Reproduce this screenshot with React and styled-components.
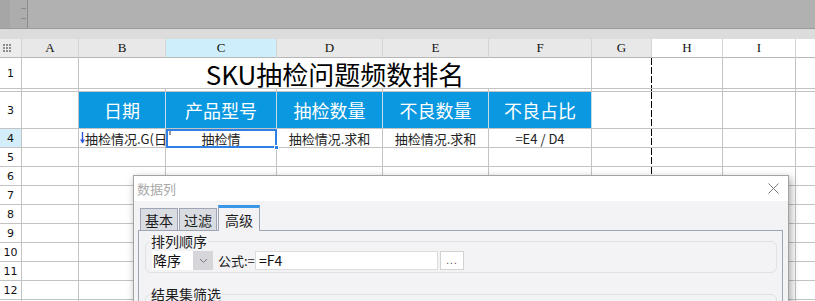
import React from "react";
import styled, { createGlobalStyle, css } from "styled-components";

const CJK = `"Noto Sans CJK SC", "Noto Sans", sans-serif`;

const COLUMNS = [
  { key: "A", width: 57 },
  { key: "B", width: 87 },
  { key: "C", width: 111, selected: true },
  { key: "D", width: 106 },
  { key: "E", width: 106 },
  { key: "F", width: 103 },
  { key: "G", width: 60, pageBreak: true },
  { key: "H", width: 71, outside: true },
  { key: "I", width: 73, outside: true },
  { key: "", width: 40, outside: true },
];

const ROWS = [
  { n: 1, h: 31 },
  { n: 2, h: 3, hidden: true },
  { n: 3, h: 37 },
  { n: 4, h: 19, selected: true },
  ...[5, 6, 7, 8, 9, 10, 11, 12, 13].map((n) => ({ n, h: 19 })),
];

const HEADS = ["日期", "产品型号", "抽检数量", "不良数量", "不良占比"];

const GlobalStyle = createGlobalStyle`
  html, body {
    margin: 0;
    padding: 0;
    background: #ffffff;
    overflow: hidden;
  }
  * { box-sizing: border-box; }
`;

const Page = styled.div`
  position: relative;
  width: 815px;
  height: 301px;
  overflow: hidden;
  display: flex;
  flex-direction: column;
  font-family: ${CJK};
`;

/* 상단 회색 툴바 */
const TopBar = styled.div`
  height: 29px;
  flex: none;
  display: flex;
  background: #b1b1b1;
  border-bottom: 1px solid #9a9a9a;
`;

const LeftStrip = styled.div`
  width: 10px;
  background: #a6a6a6;
`;

const Ruler = styled.div`
  width: 18px;
  background: #adadad;
  border-right: 1px solid #8d8d8d;
  display: flex;
  flex-direction: column;
  align-items: flex-end;
  gap: 9px;
  padding: 8px 1px 0 0;
`;

const Tick = styled.span`
  width: 5px;
  height: 1px;
  background: #8a8a8a;
`;

const Band = styled.div`
  height: 10px;
  flex: none;
  background: #dcdcdc;
`;

/* 시트 그리드 */
const Sheet = styled.div`
  display: grid;
  grid-template-columns: 22px ${COLUMNS.map((c) => `${c.width}px`).join(" ")};
  grid-template-rows: 19px ${ROWS.map((r) => `${r.h}px`).join(" ")};
`;

const Corner = styled.div`
  background: #ececec;
  border-right: 1px solid #d2d2d2;
  border-bottom: 1px solid #b6b6b6;
  display: flex;
  align-items: center;
  padding-left: 3px;
`;

const ColHead = styled.div`
  background: ${(p) => (p.$selected ? "#cdeefa" : p.$outside ? "#ffffff" : "#e8e8e8")};
  border-right: 1px solid #d4d4d4;
  border-bottom: 1px solid #b6b6b6;
  display: flex;
  align-items: center;
  justify-content: center;
  font-family: "Liberation Serif", "DejaVu Serif", serif;
  font-size: 13px;
  color: #111;
`;

const RowHead = styled.div`
  background: ${(p) => (p.$selected ? "#d3eefa" : "#ffffff")};
  border-right: 1px solid #c3c3c3;
  border-bottom: 1px solid #c3c3c3;
  display: flex;
  align-items: center;
  justify-content: center;
  font-family: "DejaVu Sans", "Liberation Sans", sans-serif;
  font-size: 11px;
  color: #111;
  overflow: hidden;
`;

const pageBreakLine = css`
  border-right: none;
  background-image: repeating-linear-gradient(to bottom, #000 0 7px, transparent 7px 9px);
  background-size: 1px 100%;
  background-position: right top;
  background-repeat: no-repeat;
`;

const Cell = styled.div`
  position: relative;
  grid-column: span ${(p) => p.$span || 1};
  border-right: 1px solid #c3c3c3;
  border-bottom: 1px solid #c3c3c3;
  display: flex;
  align-items: center;
  justify-content: center;
  font-size: 13px;
  line-height: 17px;
  color: #222;
  white-space: nowrap;
  overflow: hidden;
  ${(p) => p.$pageBreak && pageBreakLine}
`;

const TitleCell = styled(Cell)`
  font-size: 26px;
  line-height: 30px;
  color: #000;
  padding-top: 1px;
`;

const HeadCell = styled(Cell)`
  background: #0a98e0;
  border-right-color: #c9d9e6;
  color: #ffffff;
  font-size: 18px;
  line-height: 22px;
`;

const DateCell = styled(Cell)`
  justify-content: flex-start;
  padding-left: 1px;
`;

const SelectedCell = styled(Cell)`
  outline: 2px solid #2f80e4;
  outline-offset: -2px;
  overflow: visible;
  z-index: 1;
`;

const FillHandle = styled.span`
  position: absolute;
  right: -3px;
  bottom: -3px;
  width: 5px;
  height: 5px;
  background: #2f80e4;
  border: 1px solid #ffffff;
`;

const CornerMark = styled.span`
  position: absolute;
  left: 3px;
  top: 2px;
  width: 2px;
  height: 4px;
  background: #9a9a9a;
`;

/* 대화상자 */
const Dialog = styled.div`
  position: absolute;
  left: 133px;
  top: 175px;
  width: 656px;
  height: 150px;
  background: #f3f3f5;
  border: 1px solid #a3a3a3;
  box-shadow: 2px 3px 8px rgba(0, 0, 0, 0.35);
  display: flex;
  flex-direction: column;
`;

const TitleBar = styled.div`
  height: 25px;
  flex: none;
  background: #ffffff;
  display: flex;
  align-items: center;
  justify-content: space-between;
  padding: 0 9px 0 3px;
`;

const DialogTitle = styled.span`
  font-size: 13px;
  color: #a9a9a9;
`;

const DialogBody = styled.div`
  flex: 1;
  padding: 4px 5px 0 4px;
  display: flex;
  flex-direction: column;
`;

const Tabs = styled.div`
  height: 25px;
  display: flex;
  align-items: flex-end;
  gap: 1px;
  padding-left: 2px;
`;

const Tab = styled.div`
  height: ${(p) => (p.$active ? "26px" : "23px")};
  padding: 0 ${(p) => (p.$active ? "6px" : "4px")};
  margin-bottom: -1px;
  background: ${(p) => (p.$active ? "#f3f3f5" : "#d9dce1")};
  border: 1px solid #9ea6b6;
  border-top: ${(p) => (p.$active ? "3px solid #3a96e8" : "1px solid #9ea6b6")};
  border-bottom: ${(p) => (p.$active ? "none" : "1px solid #9ea6b6")};
  position: relative;
  z-index: ${(p) => (p.$active ? 1 : 0)};
  display: flex;
  align-items: center;
  font-size: 14px;
  color: #1c1c1c;
`;

const TabPanel = styled.div`
  flex: 1;
  border: 1px solid #9ea6b6;
  background: #f3f3f5;
  padding: 0 5px 0 6px;
`;

const Group = styled.fieldset`
  margin: ${(p) => (p.$first ? "0" : "11px")} 0 0 0;
  padding: 0 6px 2px 6px;
  border: 1px solid #e0e0e3;
  border-radius: 6px;
  min-height: ${(p) => (p.$first ? "auto" : "30px")};
`;

const Legend = styled.legend`
  padding: 0 1px;
  margin-left: -2px;
  font-size: 14px;
  line-height: 20px;
  color: #1c1c1c;
`;

const FieldRow = styled.div`
  display: flex;
  align-items: center;
  height: 19px;
`;

const Select = styled.div`
  width: 61px;
  height: 19px;
  display: flex;
  background: #ffffff;
  font-size: 14px;
  color: #111;
`;

const SelectText = styled.span`
  flex: 1;
  line-height: 19px;
  padding-left: 1px;
`;

const SelectArrow = styled.span`
  width: 20px;
  background: #d6d6da;
  display: flex;
  align-items: center;
  justify-content: center;
`;

const FieldLabel = styled.span`
  width: 37px;
  margin-left: 5px;
  font-size: 13px;
  color: #1c1c1c;
  white-space: nowrap;
`;

const FormulaInput = styled.div`
  width: 183px;
  height: 19px;
  background: #ffffff;
  border: 1px solid #dcdcdc;
  padding-left: 3px;
  font-size: 14px;
  line-height: 17px;
  color: #111;
`;

const DotsButton = styled.div`
  width: 24px;
  height: 19px;
  margin-left: 2px;
  background: #ffffff;
  border: 1px solid #d2d2d2;
  display: flex;
  align-items: flex-end;
  justify-content: center;
  padding-bottom: 3px;
  font-family: "Liberation Sans", sans-serif;
  font-size: 10px;
  line-height: 10px;
  letter-spacing: 1px;
  color: #444;
`;

const Grip = () => (
  <svg width="9" height="8" viewBox="0 0 9 8">
    {[0, 3, 6].map((y) =>
      [0, 3, 6].map((x) => <rect key={`${x}-${y}`} x={x} y={y} width="2" height="2" fill="#8e8e8e" />)
    )}
  </svg>
);

const DownArrow = () => (
  <svg width="5" height="12" viewBox="0 0 5 12" style={{ flex: "none" }}>
    <path d="M2.5 0 V11" stroke="#2a55d8" strokeWidth="1.4" />
    <path d="M0 7.5 L2.5 11.5 L5 7.5 Z" fill="#2a55d8" />
  </svg>
);

const Chevron = () => (
  <svg width="9" height="6" viewBox="0 0 9 6">
    <path d="M1 1 L4.5 4.5 L8 1" fill="none" stroke="#7a7a7a" strokeWidth="1" />
  </svg>
);

const CloseIcon = () => (
  <svg width="11" height="11" viewBox="0 0 11 11">
    <path d="M0.5 0.5 L10.5 10.5 M10.5 0.5 L0.5 10.5" stroke="#777" strokeWidth="1" />
  </svg>
);

const renderRowCells = (row) => {
  const cells = [];
  COLUMNS.forEach((col, ci) => {
    const pb = col.pageBreak;
    const key = `${row.n}-${ci}`;
    if (row.n === 1) {
      if (ci === 1) {
        cells.push(
          <TitleCell key={key} $span={5}>
            SKU抽检问题频数排名
          </TitleCell>
        );
        return;
      }
      if (ci > 1 && ci < 6) return;
    }
    if (row.n === 3 && ci >= 1 && ci <= 5) {
      cells.push(<HeadCell key={key}>{HEADS[ci - 1]}</HeadCell>);
      return;
    }
    if (row.n === 4) {
      if (ci === 1) {
        cells.push(
          <DateCell key={key}>
            <DownArrow />
            抽检情况.G(日期)
          </DateCell>
        );
        return;
      }
      if (ci === 2) {
        cells.push(
          <SelectedCell key={key}>
            <CornerMark />
            抽检情
            <FillHandle />
          </SelectedCell>
        );
        return;
      }
      const text = { 3: "抽检情况.求和", 4: "抽检情况.求和", 5: "=E4 / D4" }[ci];
      if (text) {
        cells.push(<Cell key={key}>{text}</Cell>);
        return;
      }
    }
    cells.push(<Cell key={key} $pageBreak={pb} />);
  });
  return cells;
};

const App = () => {
  return (
    <Page>
      <GlobalStyle />
      <TopBar>
        <LeftStrip />
        <Ruler>
          <Tick />
          <Tick />
        </Ruler>
      </TopBar>
      <Band />

      <Sheet>
        <Corner>
          <Grip />
        </Corner>
        {COLUMNS.map((c, i) => (
          <ColHead key={i} $selected={c.selected} $outside={c.outside}>
            {c.key}
          </ColHead>
        ))}
        {ROWS.map((row) => (
          <React.Fragment key={row.n}>
            <RowHead $selected={row.selected}>{row.hidden ? "" : row.n}</RowHead>
            {renderRowCells(row)}
          </React.Fragment>
        ))}
      </Sheet>

      <Dialog>
        <TitleBar>
          <DialogTitle>数据列</DialogTitle>
          <CloseIcon />
        </TitleBar>
        <DialogBody>
          <Tabs>
            <Tab>基本</Tab>
            <Tab>过滤</Tab>
            <Tab $active>高级</Tab>
          </Tabs>
          <TabPanel>
            <Group $first>
              <Legend>排列顺序</Legend>
              <FieldRow>
                <Select>
                  <SelectText>降序</SelectText>
                  <SelectArrow>
                    <Chevron />
                  </SelectArrow>
                </Select>
                <FieldLabel>公式:=</FieldLabel>
                <FormulaInput>=F4</FormulaInput>
                <DotsButton>...</DotsButton>
              </FieldRow>
            </Group>
            <Group>
              <Legend>结果集筛选</Legend>
            </Group>
          </TabPanel>
        </DialogBody>
      </Dialog>
    </Page>
  );
};

export default App;
